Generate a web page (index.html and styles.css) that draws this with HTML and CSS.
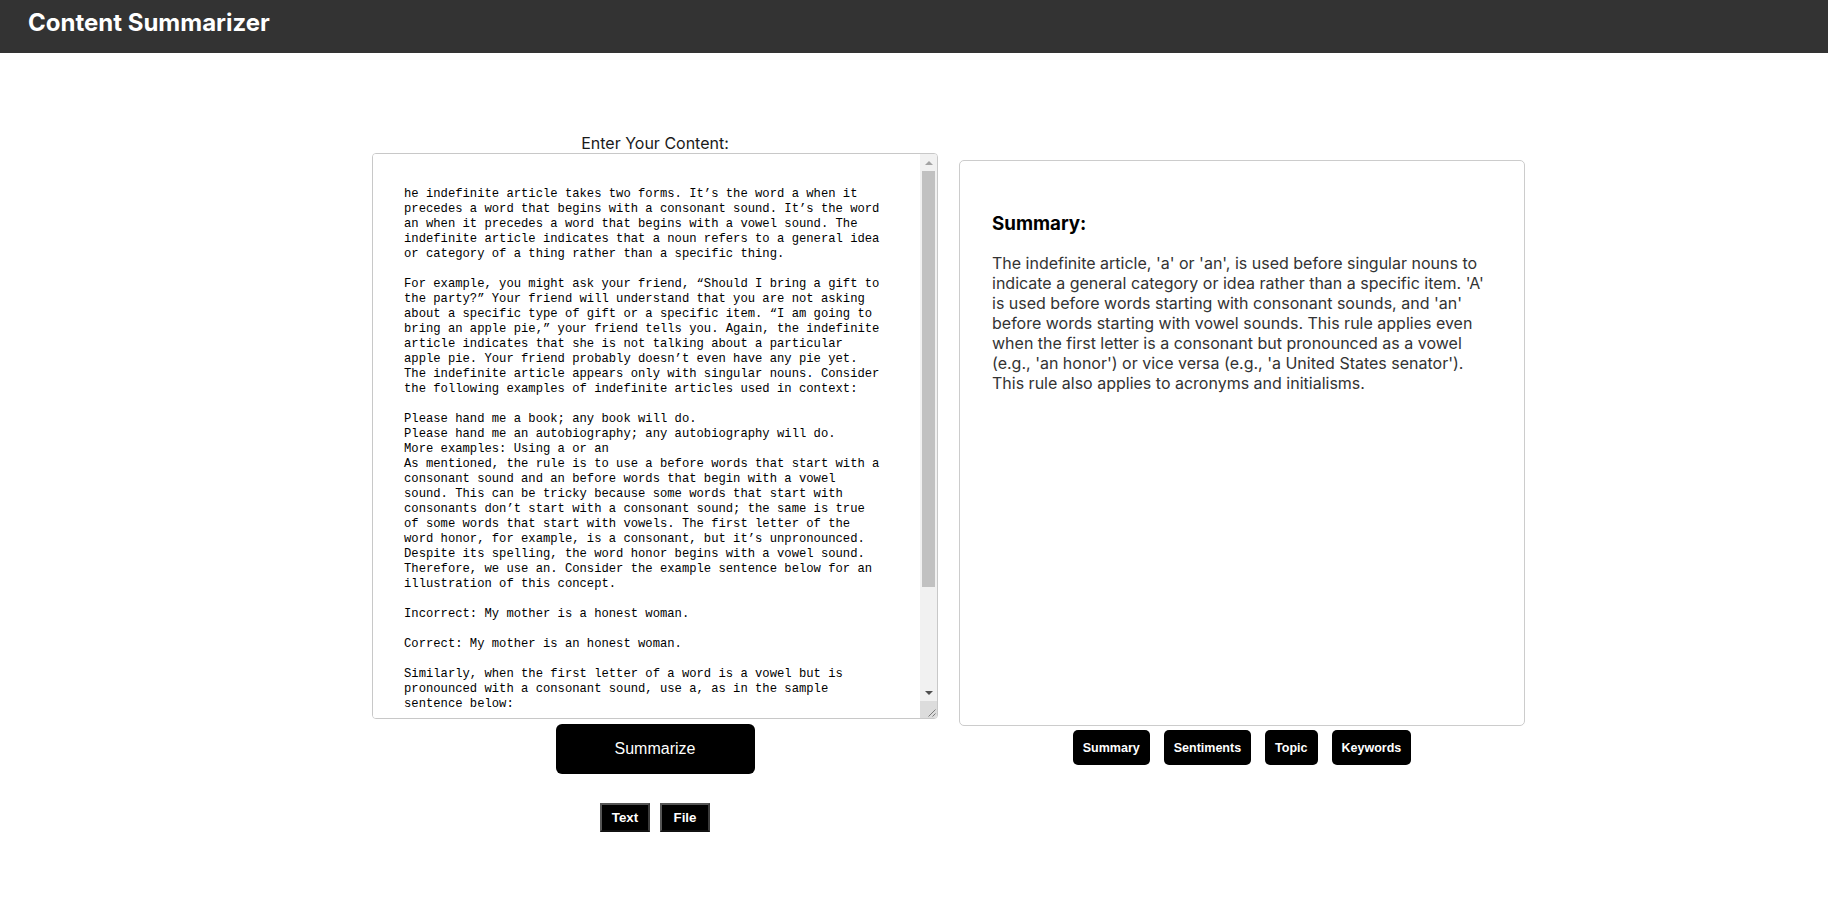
FILE: index.html
```html
<!DOCTYPE html>
<html lang="en">
<head>
<meta charset="utf-8">
<title>Content Summarizer</title>
<link rel="stylesheet" href="styles.css">
</head>
<body>
<header class="topbar">
  <h1 class="brand">Content Summarizer</h1>
</header>
<main class="workspace">
  <section class="input-col">
    <label class="input-label" for="content">Enter Your Content:</label>
    <div class="editor">
      <textarea id="content" class="content-input" spellcheck="false">he indefinite article takes two forms. It’s the word a when it
precedes a word that begins with a consonant sound. It’s the word
an when it precedes a word that begins with a vowel sound. The
indefinite article indicates that a noun refers to a general idea
or category of a thing rather than a specific thing.

For example, you might ask your friend, “Should I bring a gift to
the party?” Your friend will understand that you are not asking
about a specific type of gift or a specific item. “I am going to
bring an apple pie,” your friend tells you. Again, the indefinite
article indicates that she is not talking about a particular
apple pie. Your friend probably doesn’t even have any pie yet.
The indefinite article appears only with singular nouns. Consider
the following examples of indefinite articles used in context:

Please hand me a book; any book will do.
Please hand me an autobiography; any autobiography will do.
More examples: Using a or an
As mentioned, the rule is to use a before words that start with a
consonant sound and an before words that begin with a vowel
sound. This can be tricky because some words that start with
consonants don’t start with a consonant sound; the same is true
of some words that start with vowels. The first letter of the
word honor, for example, is a consonant, but it’s unpronounced.
Despite its spelling, the word honor begins with a vowel sound.
Therefore, we use an. Consider the example sentence below for an
illustration of this concept.

Incorrect: My mother is a honest woman.

Correct: My mother is an honest woman.

Similarly, when the first letter of a word is a vowel but is
pronounced with a consonant sound, use a, as in the sample
sentence below:

Incorrect: She is an United States senator.

Correct: She is a United States senator.

This holds true with acronyms and initialisms, too: an LCD
display, a UK-based company, an HR department, a URL.</textarea>
      <div class="vscroll" aria-hidden="true">
        <div class="vs-btn">
          <svg width="8" height="4" viewBox="0 0 8 4"><path d="M4 0L8 4H0z" fill="#a3a3a3"/></svg>
        </div>
        <div class="vs-track"><div class="vs-thumb"></div></div>
        <div class="vs-btn">
          <svg width="8" height="4" viewBox="0 0 8 4"><path d="M0 0H8L4 4z" fill="#505050"/></svg>
        </div>
        <div class="vs-corner">
          <svg width="17" height="17" viewBox="0 0 17 17"><path d="M15.5 8.5L8.5 15.5M15.5 12.5L12.5 15.5" stroke="#7a7a7a" stroke-width="1" fill="none"/></svg>
        </div>
      </div>
    </div>
    <button class="btn-summarize" type="button">Summarize</button>
    <div class="mode-switch">
      <button class="btn-mode" type="button">Text</button>
      <button class="btn-mode" type="button">File</button>
    </div>
  </section>
  <section class="output-col">
    <div class="result-card">
      <h3 class="result-title">Summary:</h3>
      <p class="result-text">The indefinite article, 'a' or 'an', is used before singular nouns to indicate a general category or idea rather than a specific item. 'A' is used before words starting with consonant sounds, and 'an' before words starting with vowel sounds. This rule applies even when the first letter is a consonant but pronounced as a vowel (e.g., 'an honor') or vice versa (e.g., 'a United States senator'). This rule also applies to acronyms and initialisms.</p>
    </div>
    <div class="tabs">
      <button class="tab" type="button">Summary</button>
      <button class="tab" type="button">Sentiments</button>
      <button class="tab" type="button">Topic</button>
      <button class="tab" type="button">Keywords</button>
    </div>
  </section>
</main>
</body>
</html>
```

FILE: styles.css
```css
html, body {
  margin: 0;
  background: #ffffff;
  font-family: Inter, "Noto Sans", sans-serif;
}

.topbar {
  box-sizing: border-box;
  height: 53px;
  background: #333333;
  padding: 8px 28px 0;
}

.brand {
  margin: 0;
  font-family: Inter, sans-serif;
  font-weight: 700;
  font-size: 24px;
  line-height: 29px;
  color: #ffffff;
}

.workspace {
  display: flex;
  justify-content: center;
  align-items: flex-start;
  gap: 21px;
  padding: 80px 0 0 69px;
}

.input-col,
.output-col {
  width: 566px;
  display: flex;
  flex-direction: column;
  align-items: center;
}

.output-col {
  margin-top: 27px;
}

.input-label {
  font-size: 16px;
  line-height: normal;
  color: #1a1a1a;
}

.editor {
  box-sizing: border-box;
  width: 566px;
  height: 566px;
  display: flex;
  border: 1px solid #c8c8c8;
  border-radius: 4px;
  overflow: hidden;
  background: #ffffff;
}

.content-input {
  flex: 1;
  display: block;
  box-sizing: border-box;
  height: 100%;
  margin: 0;
  padding: 33px 30px 30px 31px;
  border: 0;
  font-family: "Liberation Mono", "DejaVu Sans Mono", monospace;
  font-size: 12.2px;
  line-height: 15px;
  color: #000000;
  background: #ffffff;
  overflow: hidden;
  resize: none;
  outline: none;
}

.vscroll {
  width: 17px;
  flex: none;
  display: flex;
  flex-direction: column;
  background: #f1f1f1;
}

.vs-btn {
  height: 17px;
  flex: none;
  display: flex;
  align-items: center;
  justify-content: center;
}

.vs-btn svg {
  display: block;
}

.vs-track {
  flex: 1;
  padding: 0 2px;
}

.vs-thumb {
  height: 416px;
  background: #c1c1c1;
}

.vs-corner {
  height: 17px;
  flex: none;
  background: #dcdcdc;
}

.vs-corner svg {
  display: block;
}

.btn-summarize {
  margin-top: 5px;
  width: 199px;
  height: 50px;
  padding: 0;
  border: 0;
  border-radius: 6px;
  background: #000000;
  color: #ffffff;
  font-family: "Liberation Sans", Arial, sans-serif;
  font-size: 16px;
  cursor: pointer;
}

.mode-switch {
  margin-top: 29px;
  display: flex;
  gap: 10px;
}

.btn-mode {
  width: 50px;
  height: 29px;
  padding: 0;
  background: #000000;
  color: #ffffff;
  border: 2px solid;
  border-color: #555555 #3a3a3a #111111 #555555;
  font-family: "Liberation Sans", Arial, sans-serif;
  font-weight: 700;
  font-size: 13.33px;
  cursor: pointer;
}

.result-card {
  box-sizing: border-box;
  width: 566px;
  height: 566px;
  padding: 32px;
  border: 1px solid #cccccc;
  border-radius: 5px;
}

.result-title {
  margin: 18.72px 0;
  font-size: 18.72px;
  font-weight: 700;
  line-height: normal;
  color: #000000;
}

.result-text {
  margin: 0;
  font-size: 16px;
  line-height: normal;
  color: #333333;
}

.tabs {
  margin-top: 4px;
  display: flex;
  gap: 14px;
}

.tab {
  height: 35px;
  padding: 0 10px;
  border: 0;
  border-radius: 5px;
  background: #000000;
  color: #ffffff;
  font-family: "Liberation Sans", Arial, sans-serif;
  font-weight: 700;
  font-size: 12.5px;
  cursor: pointer;
}
```
